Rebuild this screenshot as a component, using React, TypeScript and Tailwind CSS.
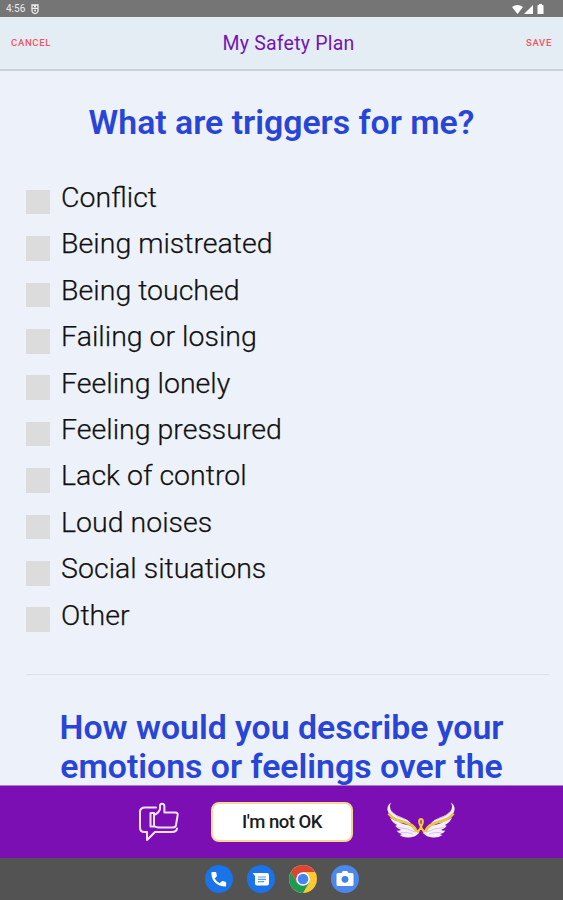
import { useState } from "react";

const triggers = [
  "Conflict",
  "Being mistreated",
  "Being touched",
  "Failing or losing",
  "Feeling lonely",
  "Feeling pressured",
  "Lack of control",
  "Loud noises",
  "Social situations",
  "Other",
];

export default function App() {
  const [checked, setChecked] = useState<string[]>([]);

  const toggle = (label: string) => {
    setChecked((prev) =>
      prev.includes(label) ? prev.filter((l) => l !== label) : [...prev, label]
    );
  };

  return (
    <div className="flex h-[900px] w-[563px] flex-col overflow-hidden bg-[#edf2fa] font-['Roboto',sans-serif]">
      <StatusBar />

      {/* Header */}
      <header className="flex h-[54px] shrink-0 items-center justify-between border-b-2 border-[#cbd3d9] bg-[#e3edf3] px-[11px] pt-px">
        <button className="w-[47px] text-left text-[9.5px] font-medium tracking-[0.7px] text-[#f2555f]">CANCEL</button>
        <h1 className="pl-[14px] text-[19.5px] tracking-[0.2px] text-[#7416b2]">My Safety Plan</h1>
        <button className="w-[47px] text-right text-[9.5px] font-medium tracking-[0.7px] text-[#f2555f]">SAVE</button>
      </header>

      {/* Questions */}
      <main className="min-h-0 flex-1 overflow-hidden pt-[32px]">
        <h2 className="text-center text-[33.8px] leading-[39px] font-semibold text-[#2945d8]">
          What are triggers for me?
        </h2>

        <ul className="mt-[32px] pl-[25.5px]">
          {triggers.map((label) => (
            <li key={label} className="h-[46.4px]">
              <button onClick={() => toggle(label)} className="flex items-start text-left">
                <span
                  className={`mt-[15.8px] h-[24.6px] w-[24.6px] shrink-0 ${checked.includes(label) ? "bg-[#7b0fb3]" : "bg-[#dcdcdc]"}`}
                />
                <span className="ml-[11px] mt-[7px] text-[28.5px] leading-[33px] font-light text-[#111] [-webkit-text-stroke:0.25px_#111]">
                  {label}
                </span>
              </button>
            </li>
          ))}
        </ul>

        <hr className="mt-[36px] mr-[14px] ml-[26px] border-[#dde1e6]" />

        <h2 className="mt-[33px] text-center text-[33.8px] leading-[39.5px] font-semibold text-[#2945d8]">
          How would you describe your
          <br />
          emotions or feelings over the
        </h2>
      </main>

      {/* Bottom actions */}
      <footer className="flex h-[73px] shrink-0 items-center border-t border-[#a87cce] bg-[#7b0fb3] pl-[136px]">
        <ThumbChatIcon />
        <button className="ml-[29px] h-10 w-[142px] rounded-lg border-2 border-[#f5d896] bg-white pt-0.5 text-[18.5px] font-medium tracking-[-0.5px] text-[#1c1c1c]">
          I'm not OK
        </button>
        <WingsIcon />
      </footer>

      <Dock />
    </div>
  );
}

function StatusBar() {
  return (
    <div className="flex h-[17px] shrink-0 items-center justify-between bg-[#757575] pt-px pr-[18px] pl-[6px] text-white">
      <div className="flex items-center gap-[6px] text-[10px] leading-none text-[#eee]">
        <span>4:56</span>
        <svg width="8" height="11" viewBox="0 0 8 11" fill="none" stroke="#eee" strokeWidth="1.3">
          <path d="M1 1h6v5.5a3 3 0 0 1-6 0zM1 4.3h6M3 2.5h2M3 6.5h2" />
        </svg>
      </div>
      <svg width="34" height="11" viewBox="0 0 34 11" fill="#fff">
        <path d="M1 3Q6.5-1 12 3L6.5 10z" />
        <path d="M22 1v9h-9z" />
        <path d="M27 1h1V0h3v1h1q.5 0 .5.7V10h-6V1.700Q26.500 1 27 1z" />
      </svg>
    </div>
  );
}

function ThumbChatIcon() {
  return (
    <svg
      width="46"
      height="42"
      viewBox="0 0 46 42"
      fill="none"
      stroke="#f4e3fb"
      strokeWidth="2"
      strokeLinecap="round"
      strokeLinejoin="round"
    >
      <path d="M20 6.500H9Q4 6.500 4 11V26.500Q4 31 8.500 31h2.500v8l8-8H36q4.500 0 5-3.500" />
      <path d="M18 12h-3.500v13.500H18z" />
      <path d="M18 14q5-2 6-6V4.500q.2-1.800 2.200-1.700 2.100.2 2.200 2.500V11.500h11q2.500.2 2.300 2.400L40 24q-.5 2.500-3 2.500H23q-3 0-5-1.500" />
    </svg>
  );
}

function WingsIcon() {
  return (
    <svg className="ml-[33px]" width="70" height="42" viewBox="0 0 70 42" fill="none">
      <Wing />
      <g transform="translate(70 0) scale(-1 1)">
        <Wing />
      </g>
      {/* ribbon */}
      <path
        d="M31.500 31.500q3.500-4.500 5-9Q37.500 18 35 18t-1.500 4.500q1.500 4.500 5 9"
        stroke="#f0cd36"
        strokeWidth="2.200"
      />
    </svg>
  );
}

function Wing() {
  return (
    <g>
      <path
        d="M5 1.500Q1 4 1.500 9q1 5 6 9l5 3.500 13 1Q21 18 15 16 7 13 4.500 8.500 3 5 5 1.500z"
        fill="#f7effa"
      />
      <path
        d="M4 16.500Q6 21.500 11 24q-.5.800-2 .600 2 3.400 6 4.400-2 1-4.500.500 2 3.200 5.500 3.500-1 1-2.500 1 4 3 10 2.500 6-.3 9.500-4.500-2-5-9-7.500-10-1.500-20-8z"
        fill="#f7effa"
      />
      <path d="M2.500 12.500Q6.500 17.500 13 19.500q9 2.500 13 5 3.500 2.500 5 6.500" stroke="#e9c63e" strokeWidth="2.800" />
      <path d="M5 10q6 6.500 14 8" stroke="#b987d2" strokeWidth=".7" />
      <path d="M12 26.500q10 .5 17 4.500M15 31.500q7-.5 12 1.500" stroke="#cfaadf" strokeWidth=".7" />
    </g>
  );
}

function Dock() {
  return (
    <nav className="flex h-[42px] shrink-0 items-center justify-center gap-[14px] bg-[#535353]">
      <svg width="28" height="28" viewBox="0 0 28 28">
        <circle cx="14" cy="14" r="14" fill="#1a73e8" />
        <path
          d="M7.300 7h3.200q.7 0 .8.700l.6 3q.1.500-.3.900l-1.900 1.800q1.900 3.300 5 4.900l1.800-1.900q.4-.4.900-.3l3 .6q.7.100.7.800v3.200q0 .9-.9.900Q14 21.200 10.300 17.800 6.500 14.200 6.400 8q0-1 .9-1z"
          fill="#fff"
        />
      </svg>
      <svg width="28" height="28" viewBox="0 0 28 28">
        <circle cx="14" cy="14" r="14" fill="#1a73e8" />
        <path d="M5.500 8H20q2 0 2 2v8.500q0 2-2 2H10q-2 0-2-2V11z" fill="#fff" />
        <path d="M11 12h8M11 14.300h8M11 16.600h6" stroke="#5b9bf0" strokeWidth="1.200" />
      </svg>
      <svg width="28" height="28" viewBox="0 0 28 28">
        <circle cx="14" cy="14" r="14" fill="#fbc934" />
        <path d="M14 14 7.900 17.500 1.900 7A14 14 0 0 1 26.100 7H14z" fill="#dc4437" />
        <path d="M1.900 7A14 14 0 0 0 14 28l6.100-10.500L14 14l-6.100 3.500z" fill="#1e9b52" />
        <circle cx="14" cy="14" r="6.800" fill="#fff" />
        <circle cx="14" cy="14" r="5.300" fill="#4285f4" />
      </svg>
      <svg width="28" height="28" viewBox="0 0 28 28">
        <circle cx="14" cy="14" r="14" fill="#4c88ec" />
        <path d="M7 8h3.500l1.300-2h4.400l1.300 2H21q1.500 0 1.500 1.500v10Q22.500 21 21 21H7q-1.500 0-1.500-1.500v-10Q5.500 8 7 8z" fill="#fff" />
        <circle cx="14" cy="14.300" r="3.400" fill="#3f7fe6" />
      </svg>
    </nav>
  );
}
